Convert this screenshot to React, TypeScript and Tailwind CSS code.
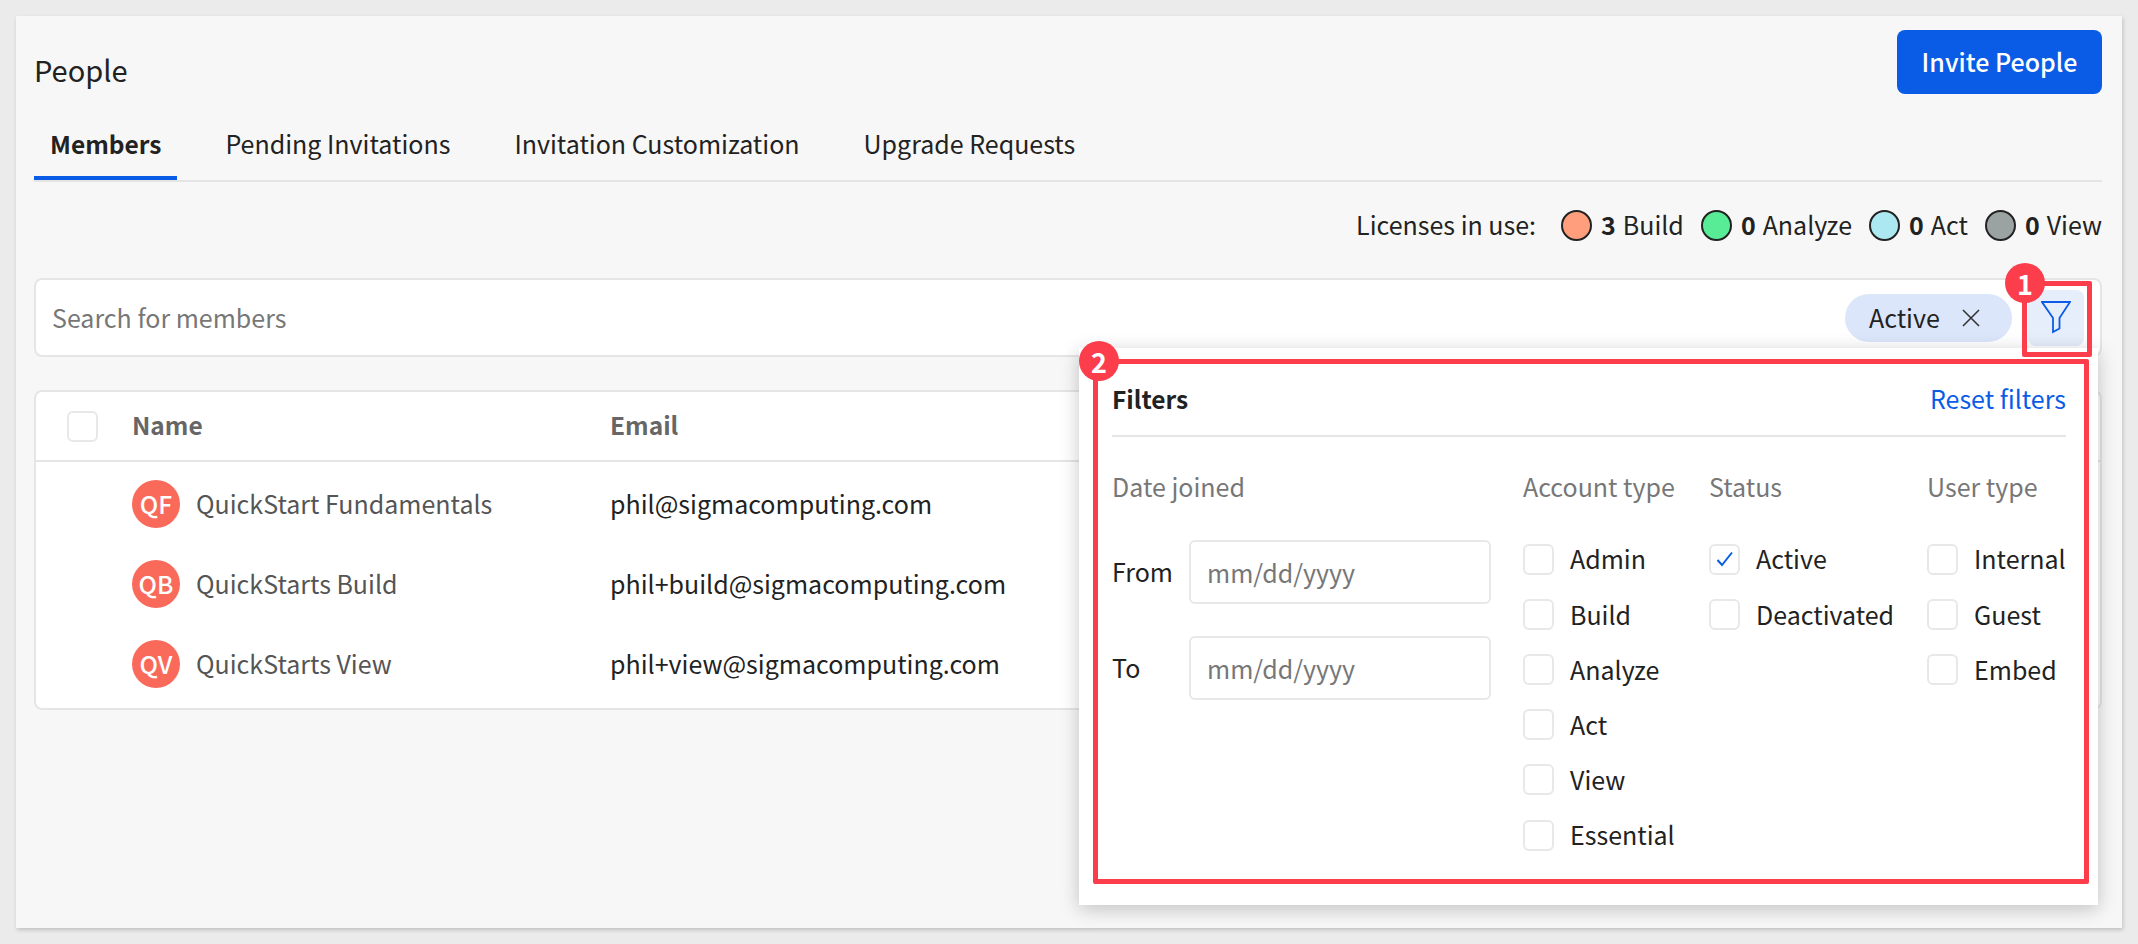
const tabs = ['Members', 'Pending Invitations', 'Invitation Customization', 'Upgrade Requests'];

const licenses = [
  { count: 3, label: 'Build', color: 'bg-[#ff9e7d]' },
  { count: 0, label: 'Analyze', color: 'bg-[#58ec96]' },
  { count: 0, label: 'Act', color: 'bg-[#ace8f1]' },
  { count: 0, label: 'View', color: 'bg-[#9ba3a2]' },
];

const members = [
  { initials: 'QF', name: 'QuickStart Fundamentals', email: 'phil@sigmacomputing.com' },
  { initials: 'QB', name: 'QuickStarts Build', email: 'phil+build@sigmacomputing.com' },
  { initials: 'QV', name: 'QuickStarts View', email: 'phil+view@sigmacomputing.com' },
];

const filterColumns = [
  { title: 'Account type', options: ['Admin', 'Build', 'Analyze', 'Act', 'View', 'Essential'] },
  { title: 'Status', options: ['Active', 'Deactivated'] },
  { title: 'User type', options: ['Internal', 'Guest', 'Embed'] },
];

const Checkbox = ({ checked = false }: { checked?: boolean }) => (
  <span className="flex h-[31px] w-[31px] shrink-0 items-center justify-center rounded-[6px] border-2 border-[#e8e8e8] bg-white">
    {checked && (
      <svg width="18" height="16" viewBox="0 0 18 16" fill="none" stroke="#0a5ce6" strokeWidth="2">
        <path d="M1.5 9 L6 14 L16 1.5" />
      </svg>
    )}
  </span>
);

const DateRow = ({ label }: { label: string }) => (
  <div className="flex items-center">
    <span className="w-[77px] text-[#222]">{label}</span>
    <input
      readOnly
      placeholder="mm/dd/yyyy"
      className="h-[64px] w-[302px] rounded-[6px] border-2 border-[#e8e8e8] bg-white pl-[16px] outline-none placeholder:text-[#777]"
    />
  </div>
);

const Callout = ({ n, className }: { n: number; className: string }) => (
  <span className={`absolute flex h-[40px] w-[40px] items-center justify-center rounded-full bg-[#fb3d4c] text-[27px] font-bold leading-none text-white ${className}`}>
    {n}
  </span>
);

export default function App() {
  return (
    <div className="h-[944px] overflow-hidden bg-[#ebebeb] pl-4 pr-4 pt-4 text-[25px] text-[#222] [font-family:'Noto_Sans_CJK_SC','Noto_Sans',sans-serif]">
      <div className="relative h-[912px] bg-[#f7f7f7] pl-[18px] pr-[20px] pt-[14px] shadow-[1px_2px_4px_rgba(0,0,0,0.18)]">
        <div className="flex h-[64px] items-start justify-between">
          <h1 className="pt-[19px] text-[29px] font-normal leading-[40px] text-[#222]">People</h1>
          <button className="h-[64px] w-[205px] rounded-[8px] bg-[#0a5ce6] font-medium text-white">Invite People</button>
        </div>

        <div className="mt-[26px] flex gap-[32px] border-b-2 border-[#e5e5e5]">
          {tabs.map((t, i) => (
            <div
              key={t}
              className={`h-[60px] px-4 leading-[30px] ${i === 0 ? 'border-b-4 border-[#0a5ce6] pt-[9px] text-[24.5px] font-semibold' : 'pt-[8px]'}`}
            >
              {t}
            </div>
          ))}
        </div>

        <div className="mt-[28px] flex h-[31px] items-center justify-end">
          <span className="mr-[25px] pb-[2px] leading-[31px]">Licenses in use:</span>
          <div className="flex gap-[17px]">
            {licenses.map((l) => (
              <div key={l.label} className="flex items-center gap-[9px]">
                <span className={`h-[31px] w-[31px] rounded-full border-2 border-[#222] ${l.color}`} />
                <span className="flex gap-[7px] pb-[2px] leading-[31px]">
                  <b className="font-semibold">{l.count}</b>
                  <span>{l.label}</span>
                </span>
              </div>
            ))}
          </div>
        </div>

        <div className="mt-[37px] flex h-[79px] items-center rounded-[8px] border-2 border-[#e5e5e5] bg-white pl-[16px] pr-[16px]">
          <input readOnly placeholder="Search for members" className="min-w-0 flex-1 bg-transparent outline-none placeholder:text-[#777]" />
          <div className="flex h-[48px] w-[167px] items-center rounded-full bg-[#dce6fa] pl-[24px]">
            <span>Active</span>
            <svg className="ml-[22px]" width="18" height="18" viewBox="0 0 18 18" stroke="#333" strokeWidth="1.6">
              <path d="M1 1 L17 17 M17 1 L1 17" />
            </svg>
          </div>
          <button className="ml-[16px] flex h-[56px] w-[56px] items-center justify-center rounded-[8px] bg-[#e6edfb]">
            <svg width="30" height="33" viewBox="0 0 30 33" fill="none" stroke="#0a5ce6" strokeWidth="1.8">
              <polygon points="1,1 29,1 18.5,17 18.5,27.5 12,31 12,17" />
            </svg>
          </button>
        </div>

        <div className="mt-[33px] h-[320px] rounded-[8px] border-2 border-[#e5e5e5] bg-white">
          <div className="flex h-[70px] items-center border-b-2 border-[#e5e5e5] pl-[31px] text-[24.5px] font-semibold text-[#666]">
            <Checkbox />
            <span className="ml-[34px] w-[478px] pb-[2px]">Name</span>
            <span className="pb-[2px]">Email</span>
          </div>
          <div className="pt-[2px]">
            {members.map((m) => (
              <div key={m.email} className="flex h-[80px] items-center pl-[96px]">
                <div className="flex w-[478px] items-center gap-[16px]">
                  <span className="flex h-[48px] w-[48px] items-center justify-center rounded-full bg-[#f96a5b] text-[24.5px] font-medium text-white">
                    {m.initials}
                  </span>
                  <span className="text-[#555]">{m.name}</span>
                </div>
                <span>{m.email}</span>
              </div>
            ))}
          </div>
        </div>

        <div className="absolute left-[1063px] top-[332px] h-[557px] w-[1019px] bg-white pl-[33px] pr-[32px] pt-[34px] shadow-[0_4px_18px_rgba(0,0,0,0.22)]">
          <div className="flex h-[55px] items-start justify-between border-b-2 border-[#e5e5e5] leading-[33px]">
            <span className="text-[24.5px] font-semibold">Filters</span>
            <span className="text-[#0a5ce6]">Reset filters</span>
          </div>
          <div className="mt-[34px] grid grid-cols-[411px_186px_218px_1fr]">
            <div>
              <div className="mb-[39px] leading-[30px] text-[#777]">Date joined</div>
              <div className="flex flex-col gap-[32px]">
                <DateRow label="From" />
                <DateRow label="To" />
              </div>
            </div>
            {filterColumns.map((col) => (
              <div key={col.title}>
                <div className="mb-[30.5px] leading-[30px] text-[#777]">{col.title}</div>
                {col.options.map((o) => (
                  <div key={o} className="flex h-[55.2px] items-center gap-[16px]">
                    <Checkbox checked={o === 'Active'} />
                    <span>{o}</span>
                  </div>
                ))}
              </div>
            ))}
          </div>
        </div>

        <div className="absolute left-[2006px] top-[265px] h-[76px] w-[70px] rounded-[2px] border-[5px] border-[#fb3d4c]" />
        <div className="absolute left-[1077px] top-[343px] h-[525px] w-[996px] rounded-[2px] border-[5px] border-[#fb3d4c]" />
        <Callout n={1} className="left-[1989px] top-[247px]" />
        <Callout n={2} className="left-[1063px] top-[325px]" />
      </div>
    </div>
  );
}
